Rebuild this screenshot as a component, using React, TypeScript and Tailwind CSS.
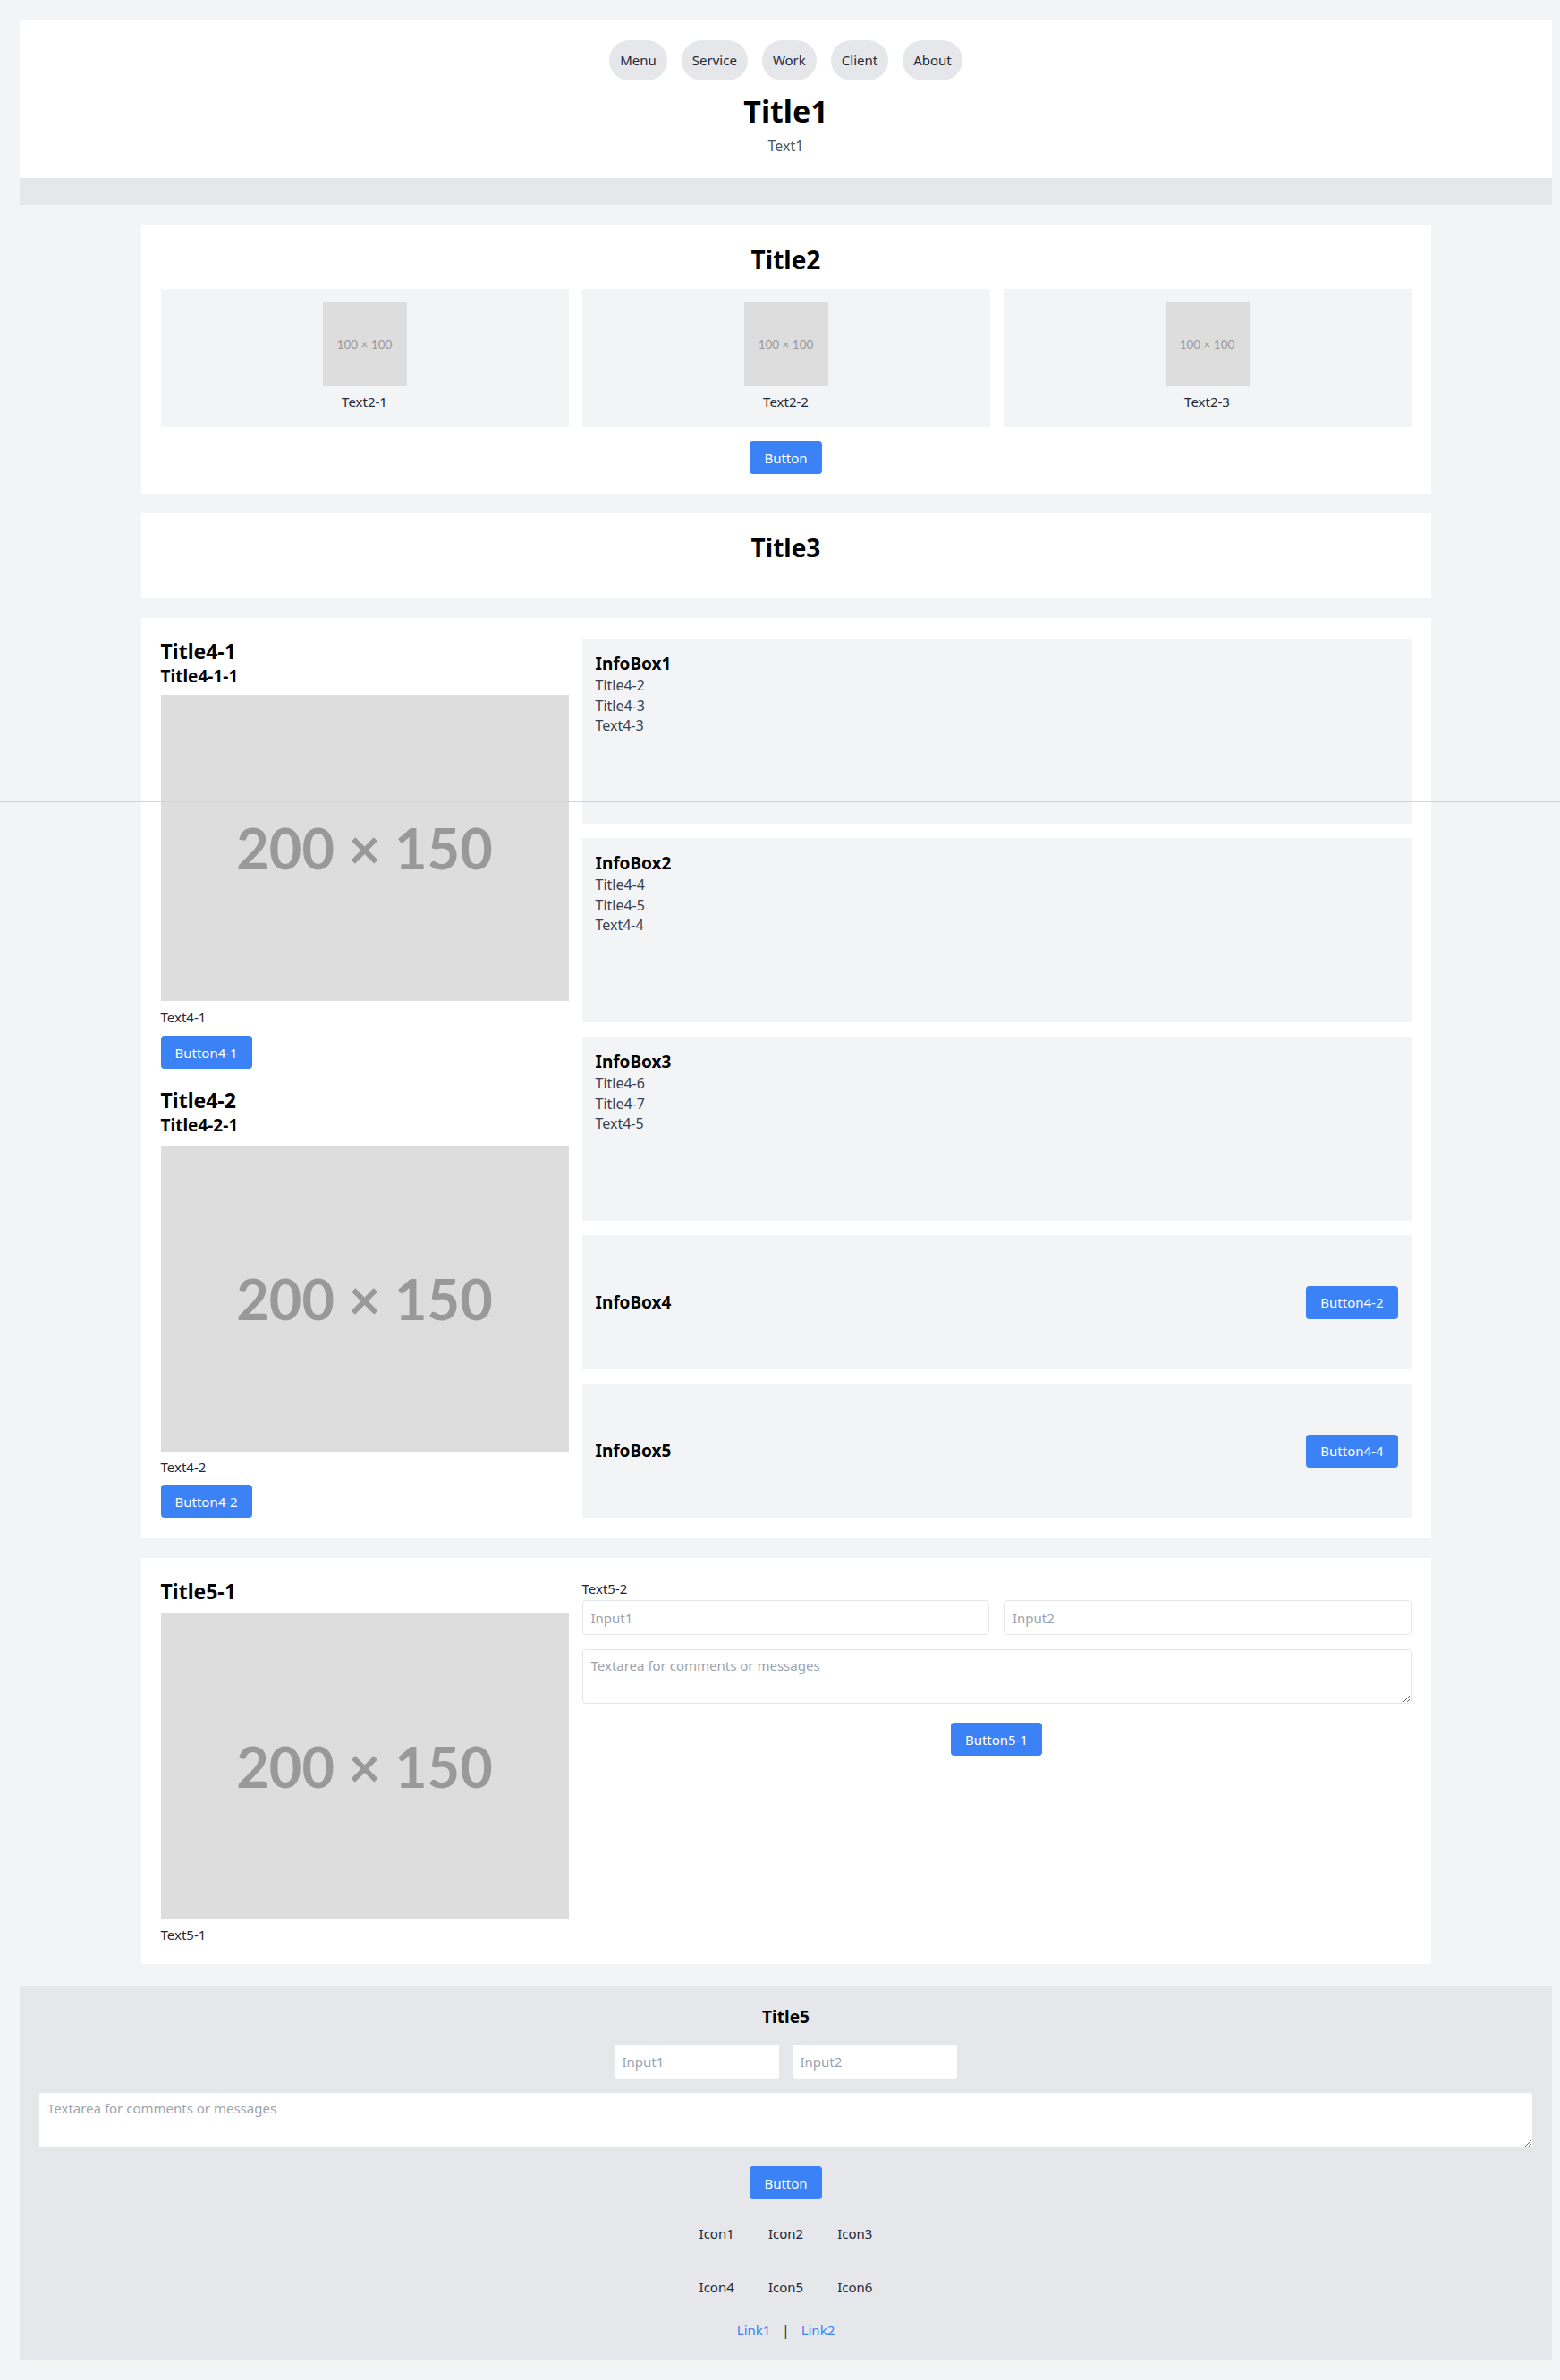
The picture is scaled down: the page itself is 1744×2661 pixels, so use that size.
import React from 'react';

const Placeholder: React.FC<{ label: string; className: string; textClass: string }> = ({ label, className, textClass }) => (
  <div className={`bg-[#dddddd] flex items-center justify-center ${className}`}>
    <span className={`font-['Lato',sans-serif] text-[#999999] ${textClass}`}>{label}</span>
  </div>
);

const Btn: React.FC<{ children: React.ReactNode; className?: string }> = ({ children, className = '' }) => (
  <button className={`h-[37px] px-[16px] bg-[#3b82f6] text-white text-[15px] leading-[22px] rounded-[4px] ${className}`}>
    {children}
  </button>
);

const App: React.FC = () => {
  const navItems = ['Menu', 'Service', 'Work', 'Client', 'About'];
  const cards = ['Text2-1', 'Text2-2', 'Text2-3'];
  const infoBoxes = [
    { title: 'InfoBox1', lines: ['Title4-2', 'Title4-3', 'Text4-3'], h: 'h-[207px]' },
    { title: 'InfoBox2', lines: ['Title4-4', 'Title4-5', 'Text4-4'], h: 'h-[206px]' },
    { title: 'InfoBox3', lines: ['Title4-6', 'Title4-7', 'Text4-5'], h: 'h-[206px]' },
  ];
  const icons = ['Icon1', 'Icon2', 'Icon3', 'Icon4', 'Icon5', 'Icon6'];

  return (
    <div className="relative min-h-screen bg-[#f3f4f6] pt-[22px] pb-[23px] pl-[22px] pr-[9px] font-['Noto_Sans',sans-serif] text-[#1f2937]">
      {/* Header */}
      <header className="bg-white h-[177px] pt-[23px] flex flex-col items-center">
        <nav className="flex gap-[16px]">
          {navItems.map((item) => (
            <a key={item} className="h-[45px] px-[12px] flex items-center rounded-full bg-[#e5e7eb] text-[15px] text-[#1f2937]">
              {item}
            </a>
          ))}
        </nav>
        <h1 className="mt-[14px] text-[34px] leading-[40px] font-bold text-black">Title1</h1>
        <p className="mt-[7px] text-[16px] leading-[24px] text-[#4b5563]">Text1</p>
      </header>
      <div className="h-[30px] bg-[#e5e7eb]"></div>

      <main className="mt-[23px] flex flex-col items-center gap-[22px]">
        {/* Section 2 */}
        <section className="w-[1442px] bg-white p-[22px] flex flex-col items-center">
          <h2 className="text-[28px] leading-[32px] font-bold text-black mb-[17px]">Title2</h2>
          <div className="w-full grid grid-cols-3 gap-[15px]">
            {cards.map((c) => (
              <div key={c} className="bg-[#f3f4f6] pt-[15px] pb-[17px] flex flex-col items-center">
                <Placeholder label="100 × 100" className="w-[94px] h-[94px]" textClass="text-[13.5px]" />
                <span className="mt-[6px] text-[15px] leading-[22px]">{c}</span>
              </div>
            ))}
          </div>
          <Btn className="mt-[16px]">Button</Btn>
        </section>

        {/* Section 3 */}
        <section className="w-[1442px] bg-white pt-[22px] pb-[41px] flex justify-center">
          <h2 className="text-[28px] leading-[32px] font-bold text-black">Title3</h2>
        </section>

        {/* Section 4 */}
        <section className="w-[1442px] bg-white px-[22px] pt-[23px] pb-[23px] grid grid-cols-3 gap-[15px]">
          <div className="flex flex-col items-start">
            <h3 className="text-[23px] leading-[29px] font-bold text-black">Title4-1</h3>
            <h4 className="text-[19px] leading-[26px] font-bold text-black">Title4-1-1</h4>
            <Placeholder label="200 × 150" className="mt-[8px] w-full h-[342px]" textClass="text-[63px] font-bold" />
            <p className="mt-[7px] text-[15px] leading-[22px]">Text4-1</p>
            <Btn className="mt-[10px]">Button4-1</Btn>

            <h3 className="mt-[21px] text-[23px] leading-[29px] font-bold text-black">Title4-2</h3>
            <h4 className="text-[19px] leading-[26px] font-bold text-black">Title4-2-1</h4>
            <Placeholder label="200 × 150" className="mt-[10px] w-full h-[342px]" textClass="text-[63px] font-bold" />
            <p className="mt-[6px] text-[15px] leading-[22px]">Text4-2</p>
            <Btn className="mt-[9px]">Button4-2</Btn>
          </div>

          <div className="col-span-2 flex flex-col gap-[16px]">
            {infoBoxes.map((box) => (
              <div key={box.title} className={`bg-[#f3f4f6] p-[15px] ${box.h}`}>
                <h4 className="text-[19px] leading-[26px] font-bold text-black">{box.title}</h4>
                {box.lines.map((l) => (
                  <p key={l} className="text-[16px] leading-[22.5px] text-[#374151]">{l}</p>
                ))}
              </div>
            ))}
            <div className="bg-[#f3f4f6] h-[150px] px-[15px] flex items-center justify-between">
              <h4 className="text-[19px] leading-[26px] font-bold text-black">InfoBox4</h4>
              <Btn>Button4-2</Btn>
            </div>
            <div className="bg-[#f3f4f6] h-[150px] px-[15px] flex items-center justify-between">
              <h4 className="text-[19px] leading-[26px] font-bold text-black">InfoBox5</h4>
              <Btn>Button4-4</Btn>
            </div>
          </div>
        </section>

        {/* Section 5 */}
        <section className="w-[1442px] bg-white pt-[23px] px-[22px] pb-[22px] grid grid-cols-3 gap-[15px]">
          <div className="flex flex-col">
            <h3 className="text-[23px] leading-[29px] font-bold text-black">Title5-1</h3>
            <Placeholder label="200 × 150" className="mt-[10px] w-full h-[342px]" textClass="text-[63px] font-bold" />
            <p className="mt-[6px] text-[15px] leading-[22px]">Text5-1</p>
          </div>
          <div className="col-span-2 flex flex-col">
            <p className="text-[15px] leading-[22px]">Text5-2</p>
            <div className="mt-[2px] grid grid-cols-2 gap-[16px]">
              <input placeholder="Input1" className="h-[39px] px-[9px] border border-[#e5e7eb] rounded-[4px] text-[15px] placeholder:text-[#9ca3af] outline-none" />
              <input placeholder="Input2" className="h-[39px] px-[9px] border border-[#e5e7eb] rounded-[4px] text-[15px] placeholder:text-[#9ca3af] outline-none" />
            </div>
            <textarea
              placeholder="Textarea for comments or messages"
              className="mt-[16px] h-[61px] px-[9px] py-[6px] border border-[#e5e7eb] rounded-[4px] text-[15px] leading-[22px] placeholder:text-[#9ca3af] outline-none"
            ></textarea>
            <Btn className="mt-[21px] self-center">Button5-1</Btn>
          </div>
        </section>
      </main>

      {/* Footer */}
      <footer className="mt-[24px] bg-[#e5e7eb] h-[419px] p-[22px] flex flex-col items-center">
        <h3 className="text-[19px] leading-[26px] font-bold text-black">Title5</h3>
        <div className="mt-[18px] flex gap-[16px]">
          <input placeholder="Input1" className="w-[183px] h-[38px] px-[8px] bg-white rounded-[3px] text-[15px] placeholder:text-[#9ca3af] outline-none" />
          <input placeholder="Input2" className="w-[183px] h-[38px] px-[8px] bg-white rounded-[3px] text-[15px] placeholder:text-[#9ca3af] outline-none" />
        </div>
        <textarea
          placeholder="Textarea for comments or messages"
          className="mt-[16px] w-full h-[61px] px-[9px] py-[6px] bg-white rounded-[3px] text-[15px] leading-[22px] placeholder:text-[#9ca3af] outline-none"
        ></textarea>
        <Btn className="mt-[21px]">Button</Btn>
        <div className="mt-[8px] w-[232px] grid grid-cols-3">
          {icons.map((i) => (
            <div key={i} className="h-[60px] flex items-center justify-center text-[15px] text-[#1f2937]">
              {i}
            </div>
          ))}
        </div>
        <div className="mt-[7px] flex items-center gap-[13px] text-[15px] leading-[22px]">
          <a className="text-[#3b82f6]">Link1</a>
          <span className="text-[#1f2937]">|</span>
          <a className="text-[#3b82f6]">Link2</a>
        </div>
      </footer>

      {/* thin seam line across the page */}
      <div className="absolute left-0 right-0 top-[896px] h-px bg-[#d4d4d4]"></div>
    </div>
  );
};

export default App;
